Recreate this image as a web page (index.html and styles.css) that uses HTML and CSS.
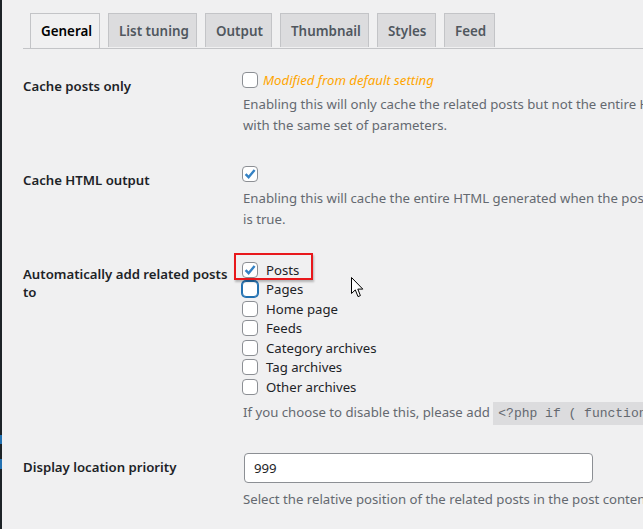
FILE: index.html
```html
<!DOCTYPE html>
<html>
<head>
<meta charset="utf-8">
<link rel="stylesheet" href="styles.css">
</head>
<body>
<div class="edge"><span class="blue b1"></span><span class="blue b2"></span></div>
<div class="wrap">
  <nav class="tabs">
    <span class="tab active">General</span>
    <span class="tab">List tuning</span>
    <span class="tab">Output</span>
    <span class="tab">Thumbnail</span>
    <span class="tab">Styles</span>
    <span class="tab">Feed</span>
  </nav>

  <div class="row r1">
    <div class="th">Cache posts only</div>
    <div class="td">
      <div class="line"><span class="cb"></span><span class="modified">Modified from default setting</span></div>
      <p class="desc">Enabling this will only cache the related posts but not the entire HTML output. This is useful if you have multiple related posts sections<br>with the same set of parameters.</p>
    </div>
  </div>

  <div class="row r2">
    <div class="th">Cache HTML output</div>
    <div class="td">
      <div class="line"><span class="cb checked"><svg viewBox="0 0 16 16"><path d="M3.6 8.2 L6.6 11.2 L12.6 4" /></svg></span></div>
      <p class="desc">Enabling this will cache the entire HTML generated when the post is visited the first time. The cache is cleaned when Cache posts only<br>is true.</p>
    </div>
  </div>

  <div class="row r3">
    <div class="th">Automatically add related posts to</div>
    <div class="td">
      <ul class="checks">
        <li><span class="cb checked"><svg viewBox="0 0 16 16"><path d="M3.6 8.2 L6.6 11.2 L12.6 4" /></svg></span>Posts</li>
        <li><span class="cb focus"></span>Pages</li>
        <li><span class="cb"></span>Home page</li>
        <li><span class="cb"></span>Feeds</li>
        <li><span class="cb"></span>Category archives</li>
        <li><span class="cb"></span>Tag archives</li>
        <li><span class="cb"></span>Other archives</li>
      </ul>
      <p class="desc">If you choose to disable this, please add <code>&lt;?php if ( function_exists( 'echo_crp' ) ) echo_crp(); ?&gt;</code></p>
      <span class="redbox"></span>
      <svg class="cursor" viewBox="0 0 13 21" width="13" height="21"><path d="M0.5 0.5 L0.5 16.5 L4.3 12.9 L7 19.6 L9.4 18.6 L6.8 12.1 L11.8 12.1 Z" fill="#fff" stroke="#000" stroke-width="1" stroke-linejoin="miter"/></svg>
    </div>
  </div>

  <div class="row r4">
    <div class="th">Display location priority</div>
    <div class="td">
      <div class="input">999</div>
      <p class="desc">Select the relative position of the related posts in the post content. A higher number pushes the output lower.</p>
    </div>
  </div>
</div>
</body>
</html>
```

FILE: styles.css
```css
html, body {
  margin: 0;
  padding: 0;
  background: #f0f0f1;
  height: 100%;
  overflow: hidden;
}
body {
  font-family: "Noto Sans", "Open Sans", sans-serif;
  color: #1d2327;
  font-size: 13.2px;
  position: relative;
}
.edge {
  position: absolute;
  left: 0;
  top: 0;
  width: 2px;
  height: 100%;
  background: #1d2327;
}
.blue {
  position: absolute;
  left: 0;
  width: 2px;
  background: #2271b1;
}
.b1 { top: 435px; height: 9px; }
.b2 { top: 459px; height: 10px; }
.wrap {
  padding-left: 23px;
  white-space: nowrap;
}
.tabs {
  display: flex;
  gap: 8px;
  padding: 13px 0 0 7px;
  border-bottom: 1px solid #c3c4c7;
  height: 35px;
  box-sizing: content-box;
}
.tab {
  display: block;
  height: 34px;
  line-height: 34px;
  padding: 0 10px;
  background: #dcdcde;
  border: 1px solid #c3c4c7;
  border-bottom: none;
  color: #50575e;
  font-weight: 600;
  font-size: 13.4px;
  text-align: center;
  box-sizing: border-box;
}
.tab:nth-child(1) { width: 70px; }
.tab:nth-child(2) { width: 89px; }
.tab:nth-child(3) { width: 67px; }
.tab:nth-child(4) { width: 89px; }
.tab:nth-child(5) { width: 59px; }
.tab:nth-child(6) { width: 51px; }
.tab.active {
  background: #f0f0f1;
  color: #000;
  height: 35px;
  margin-bottom: -1px;
}
.row {
  display: flex;
}
.th {
  width: 210px;
  padding: 20px 0 20px 0;
  font-weight: 600;
  line-height: 18px;
  white-space: normal;
  flex: none;
}
.td {
  padding: 15px 10px 15px 10px;
  position: relative;
}
.r1 { margin-top: 8px; }
.line {
  height: 22px;
  display: flex;
  align-items: flex-start;
}
.line .cb { margin-top: 0; }
.cb {
  width: 14px;
  height: 14px;
  border: 1px solid #8c8f94;
  border-radius: 4px;
  background: #fff;
  display: inline-block;
  position: relative;
  flex: none;
  margin-left: -1px;
}
.cb svg {
  position: absolute;
  left: -1px;
  top: -1px;
  width: 16px;
  height: 16px;
}
.cb svg path {
  fill: none;
  stroke: #3582c4;
  stroke-width: 2.4;
}
.cb.focus {
  border-color: #2271b1;
  box-shadow: 0 0 0 1px #2271b1;
}
.modified {
  margin-left: 5px;
  color: #ffa500;
  font-style: italic;
  line-height: 16px;
}
.desc {
  margin: 0;
  color: #646970;
  line-height: 21px;
}
.checks {
  list-style: none;
  margin: 0;
  padding: 0;
}
.checks li {
  height: 19.5px;
  display: flex;
  align-items: center;
  gap: 8px;
}
.r3 .desc { margin-top: 5px; }
code {
  font-family: "Liberation Mono", monospace;
  font-size: 13px;
  line-height: 1;
  background: #dcdcde;
  padding: 4px 5px 4px;
}
.redbox {
  position: absolute;
  left: 1px;
  top: 8px;
  width: 75px;
  height: 23px;
  border: 2px solid #e8181c;
  box-shadow: 1px 2px 2px rgba(0,0,0,0.25);
}
.cursor {
  position: absolute;
  left: 118px;
  top: 32px;
}
.input {
  width: 338px;
  height: 28px;
  border: 1px solid #8c8f94;
  border-radius: 4px;
  background: #fff;
  padding: 0 0 0 9px;
  line-height: 28px;
  margin: 0 0 6px 1px;
}
```
